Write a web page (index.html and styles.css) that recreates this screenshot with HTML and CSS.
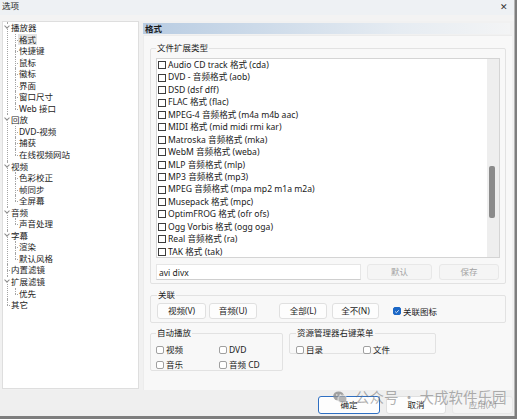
FILE: index.html
```html
<!DOCTYPE html>
<html lang="zh">
<head>
<meta charset="utf-8">
<title>选项</title>
<link rel="stylesheet" href="styles.css">
</head>
<body>
<div class="window">
  <div class="titlebar">
    <span class="title">选项</span>
    <span class="close">✕</span>
  </div>
  <div class="main">
    <div class="treepanel">
      <ul class="tree">
        <li><span class="exp"></span>播放器
          <ul>
            <li><span class="sel">格式</span></li>
            <li>快捷键</li>
            <li>鼠标</li>
            <li>徽标</li>
            <li>界面</li>
            <li>窗口尺寸</li>
            <li>Web 接口</li>
          </ul>
        </li>
        <li><span class="exp"></span>回放
          <ul>
            <li>DVD-视频</li>
            <li>捕获</li>
            <li>在线视频网站</li>
          </ul>
        </li>
        <li><span class="exp"></span>视频
          <ul>
            <li>色彩校正</li>
            <li>帧同步</li>
            <li>全屏幕</li>
          </ul>
        </li>
        <li><span class="exp"></span>音频
          <ul>
            <li>声音处理</li>
          </ul>
        </li>
        <li><span class="exp"></span>字幕
          <ul>
            <li>渲染</li>
            <li>默认风格</li>
          </ul>
        </li>
        <li>内置滤镜</li>
        <li><span class="exp"></span>扩展滤镜
          <ul>
            <li>优先</li>
          </ul>
        </li>
        <li>其它</li>
      </ul>
    </div>
    <div class="right">
      <div class="header">格式</div>
      <div class="page">
        <fieldset class="grp grp-ext">
          <legend>文件扩展类型</legend>
          <div class="listbox">
            <ul class="items">
              <li><span class="cb"></span>Audio CD track 格式 (cda)</li>
              <li><span class="cb"></span>DVD - 音频格式 (aob)</li>
              <li><span class="cb"></span>DSD (dsf dff)</li>
              <li><span class="cb"></span>FLAC 格式 (flac)</li>
              <li><span class="cb"></span>MPEG-4 音频格式 (m4a m4b aac)</li>
              <li><span class="cb"></span>MIDI 格式 (mid midi rmi kar)</li>
              <li><span class="cb"></span>Matroska 音频格式 (mka)</li>
              <li><span class="cb"></span>WebM 音频格式 (weba)</li>
              <li><span class="cb"></span>MLP 音频格式 (mlp)</li>
              <li><span class="cb"></span>MP3 音频格式 (mp3)</li>
              <li><span class="cb"></span>MPEG 音频格式 (mpa mp2 m1a m2a)</li>
              <li><span class="cb"></span>Musepack 格式 (mpc)</li>
              <li><span class="cb"></span>OptimFROG 格式 (ofr ofs)</li>
              <li><span class="cb"></span>Ogg Vorbis 格式 (ogg oga)</li>
              <li><span class="cb"></span>Real 音频格式 (ra)</li>
              <li><span class="cb"></span>TAK 格式 (tak)</li>
            </ul>
            <div class="vscroll"><div class="thumb"></div></div>
          </div>
          <div class="extrow">
            <div class="input">avi divx</div>
            <button class="btn dis b-def">默认</button>
            <button class="btn dis b-save">保存</button>
          </div>
        </fieldset>
        <fieldset class="grp grp-assoc">
          <legend>关联</legend>
          <div class="assocrow">
            <button class="btn b-v">视频(V)</button>
            <button class="btn b-u">音频(U)</button>
            <button class="btn b-l">全部(L)</button>
            <button class="btn b-n">全不(N)</button>
            <label class="chk"><span class="cbox on"><svg viewBox="0 0 8 8" width="7" height="7"><path d="M1.6 4.1 L3.2 5.6 L6.4 2.4" fill="none" stroke="#fff" stroke-width="1.1"/></svg></span>关联图标</label>
          </div>
        </fieldset>
        <div class="lowrow">
          <fieldset class="grp grp-auto">
            <legend>自动播放</legend>
            <div class="opts">
              <label class="chk"><span class="cbox"></span>视频</label>
              <label class="chk"><span class="cbox"></span>DVD</label>
              <label class="chk"><span class="cbox"></span>音乐</label>
              <label class="chk"><span class="cbox"></span>音频 CD</label>
            </div>
          </fieldset>
          <fieldset class="grp grp-shell">
            <legend>资源管理器右键菜单</legend>
            <div class="opts opts2">
              <label class="chk"><span class="cbox"></span>目录</label>
              <label class="chk"><span class="cbox"></span>文件</label>
            </div>
          </fieldset>
        </div>
      </div>
    </div>
  </div>
  <div class="footer">
    <button class="btn fbtn ok">确定</button>
    <button class="btn fbtn">取消</button>
    <button class="btn fbtn dis">应用(A)</button>
    <div class="watermark">
      <svg class="wx" viewBox="0 0 14 13" width="14" height="13">
        <ellipse cx="5.6" cy="5" rx="5.4" ry="4.6" fill="#8d8d8d"/>
        <ellipse cx="9.4" cy="8" rx="4.4" ry="3.8" fill="#a3a3a3" stroke="#f0f0f0" stroke-width="0.8"/>
        <circle cx="3.8" cy="4" r="0.8" fill="#f0f0f0"/>
        <circle cx="7.3" cy="4" r="0.8" fill="#f0f0f0"/>
      </svg>
      <span>公众号 · 大成软件乐园</span>
    </div>
  </div>
</div>
</body>
</html>
```
FILE: styles.css
```css
* { box-sizing: border-box; }
html, body { margin: 0; padding: 0; }
body {
  width: 517px;
  height: 419px;
  overflow: hidden;
  background: #7e7e7e;
  font-family: "Noto Sans", "Noto Sans CJK SC", sans-serif;
  font-size: 8.5px;
  color: #1c1c1c;
}
.window {
  width: 515px;
  height: 416px;
  background: #f1f1f1;
  border-right: 1px solid #b5b5b5;
  display: flex;
  flex-direction: column;
}
.titlebar {
  height: 21px;
  display: flex;
  justify-content: space-between;
  align-items: flex-start;
  background: linear-gradient(#eef1f4 0, #eef1f4 15px, #f3f3f3 15px);
  padding: 0 6px 0 2px;
}
.title { line-height: 12px; font-size: 8.5px; }
.close { font-size: 9px; line-height: 13px; color: #333; }

.main {
  height: 369px;
  display: flex;
  gap: 4px;
  padding-left: 2px;
}
.treepanel {
  width: 137px;
  height: 368px;
  background: #fff;
  border: 1px solid #dedede;
}
.tree, .tree ul { list-style: none; margin: 0; }
.tree { padding: 0 0 0 8px; }
.tree ul { padding: 0 0 0 8px; }
.tree li { position: relative; line-height: 11.55px; white-space: nowrap; }
.tree li::before {
  content: "";
  position: absolute;
  left: -4px;
  top: 0;
  bottom: 0;
  border-left: 1px dotted #a4a4a4;
}
.tree li:last-child::before { bottom: auto; height: 6px; }
.tree li::after {
  content: "";
  position: absolute;
  left: -4px;
  top: 6px;
  width: 3px;
  border-top: 1px dotted #a4a4a4;
}
.tree .exp {
  position: absolute;
  left: -7px;
  top: 2px;
  width: 6px;
  height: 5px;
  background: #fff;
  z-index: 1;
}
.tree .exp::after {
  content: "";
  position: absolute;
  left: 1px;
  top: 0;
  width: 3px;
  height: 3px;
  border-right: 1px solid #8a8a8a;
  border-bottom: 1px solid #8a8a8a;
  transform: rotate(45deg);
}
.tree .sel { background: #e4e4e4; padding: 0 1px; margin-left: -1px; }

.right {
  width: 369px;
  display: flex;
  flex-direction: column;
  padding-top: 2px;
}
.header {
  height: 11px;
  line-height: 11px;
  font-weight: bold;
  padding-left: 2px;
  width: 367px;
  background: linear-gradient(to right, #b8cce2 0%, #cfdcea 35%, #e6ecf2 70%, #f3f4f5 100%);
}
.page {
  flex: 1;
  margin-top: 1px;
  background: #f8f8f8;
  border-left: 1px solid #ececec;
  border-top: 1px solid #ececec;
  padding: 6px 6px 0 6px;
}
.grp {
  margin: 0;
  border: 1px solid #e2e2e2;
  border-radius: 2px;
  min-width: 0;
}
.grp legend {
  padding: 0 1px;
  margin-left: 0;
  line-height: 12px;
  font-size: 8.5px;
  color: #222;
}
.grp-ext { padding: 4px 5px 3px 5px; width: 356px; }
.listbox {
  height: 200px;
  background: #fff;
  border: 1px solid #d4d4d4;
  display: flex;
}
.items {
  flex: 1;
  list-style: none;
  margin: 0;
  padding: 0;
}
.items li {
  height: 12.45px;
  line-height: 12.45px;
  display: flex;
  align-items: center;
  white-space: nowrap;
  color: #1a1a1a;
  font-size: 8.6px;
}
.cb {
  width: 8px;
  height: 8px;
  border: 1px solid #3c3c3c;
  margin: 0 2px 0 1px;
  background: #fff;
  flex: none;
}
.vscroll {
  width: 12px;
  background: #eeeeee;
  padding-top: 107px;
  padding-left: 2px;
}
.thumb { width: 6px; height: 52px; background: #8b8b8b; border-radius: 2px; }
.extrow {
  margin-top: 6px;
  height: 16px;
  display: flex;
}
.input {
  width: 205px;
  height: 16px;
  line-height: 15px;
  background: #fff;
  border: 1px solid #e6e6e6;
  border-bottom-color: #cfcfcf;
  padding-left: 2px;
}
.btn {
  font-family: inherit;
  font-size: 8.5px;
  height: 16px;
  padding: 0;
  border: 1px solid #e0e0e0;
  border-radius: 3px;
  background: #fdfdfd;
  color: #1c1c1c;
  line-height: 14px;
}
.btn.dis { background: #f5f5f5; color: #a3a3a3; border-color: #e8e8e8; }
.b-def { width: 65px; margin-left: 6px; }
.b-save { width: 60px; margin-left: 7px; }

.grp-assoc { margin-top: 5px; padding: 2px 6px 3px 6px; width: 356px; }
.assocrow { display: flex; align-items: center; height: 16px; }
.b-v { width: 49px; }
.b-u { width: 48px; margin-left: 3px; }
.b-l { width: 48px; margin-left: 22px; }
.b-n { width: 47px; margin-left: 5px; }
.chk { display: flex; align-items: center; white-space: nowrap; color: #222; }
.assocrow .chk { margin-left: 14px; }
.cbox {
  width: 8px;
  height: 8px;
  border: 1px solid #a0a0a0;
  border-radius: 2px;
  background: #fff;
  margin-right: 2px;
  flex: none;
  display: flex;
}
.cbox.on { background: #1b67c6; border-color: #1b67c6; }
.cbox svg { display: block; }

.lowrow { display: flex; gap: 6px; margin-top: 4px; align-items: flex-start; }
.grp-auto { width: 133px; height: 44px; padding: 5px 5px 0 5px; }
.grp-shell { width: 147px; height: 27px; padding: 5px 6px 0 6px; }
.opts {
  display: grid;
  grid-template-columns: 63px auto;
  row-gap: 4px;
  line-height: 11px;
}
.opts2 { grid-template-columns: 67px auto; }

.footer {
  position: relative;
  height: 26px;
  display: flex;
  justify-content: flex-end;
  align-items: flex-start;
  gap: 6px;
  padding: 6px 1px 0 0;
  background: #efefef;
}
.fbtn { height: 18px; line-height: 16px; }
.fbtn:nth-child(1) { width: 62px; }
.fbtn:nth-child(2) { width: 60px; }
.fbtn:nth-child(3) { width: 61px; }
.fbtn.ok { border: 1px solid #2f6fc2; box-shadow: inset 0 0 0 1px #fff; }
.watermark {
  position: absolute;
  left: 333px;
  top: -1px;
  display: flex;
  align-items: center;
  gap: 8px;
  color: rgba(110, 110, 110, 0.55);
  font-size: 14.5px;
  line-height: 16px;
  pointer-events: none;
  font-family: "Noto Sans CJK SC", sans-serif;
}
.wx { opacity: 0.8; }
```
